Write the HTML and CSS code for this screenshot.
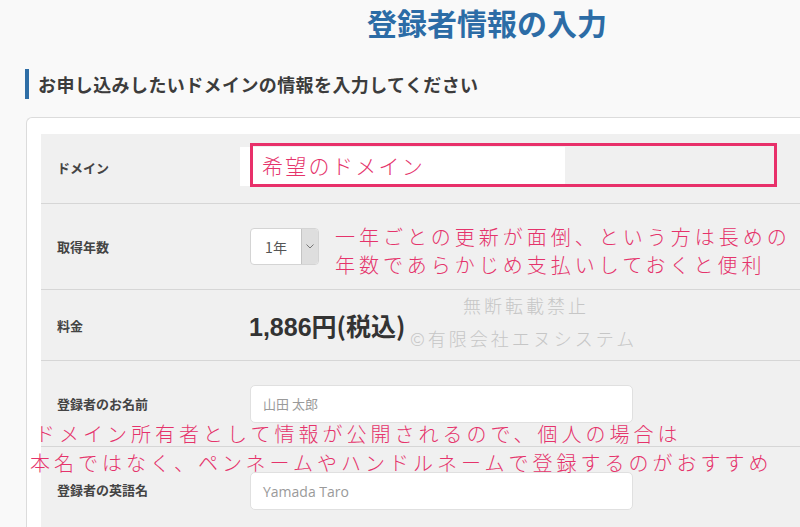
FILE: index.html
```html
<!DOCTYPE html>
<html lang="ja">
<head>
<meta charset="utf-8">
<title>登録者情報の入力</title>
<link rel="stylesheet" href="styles.css">
</head>
<body>
<div class="page">
  <h1 class="title">登録者情報の入力</h1>
  <h2 class="section-head">お申し込みしたいドメインの情報を入力してください</h2>
  <div class="card">
    <div class="table">
      <div class="row row-domain">
        <div class="label">ドメイン</div>
        <div class="field"><div class="domain-input"></div></div>
      </div>
      <div class="row row-years">
        <div class="label">取得年数</div>
        <div class="field">
          <div class="select">
            <span class="select-value">1年</span>
            <span class="select-arrow"><svg width="8" height="5" viewBox="0 0 8 5"><polyline points="0.5,0.5 4,4 7.5,0.5" fill="none" stroke="#777" stroke-width="1"/></svg></span>
          </div>
        </div>
      </div>
      <div class="row row-price">
        <div class="label">料金</div>
        <div class="field price"><span class="num">1,886</span>円(税込)</div>
      </div>
      <div class="row row-name">
        <div class="label">登録者のお名前</div>
        <div class="field"><div class="text-input">山田 太郎</div></div>
      </div>
      <div class="row row-ename">
        <div class="label">登録者の英語名</div>
        <div class="field"><div class="text-input latin">Yamada Taro</div></div>
      </div>
    </div>
  </div>

  <div class="note-box"><span class="note">希望のドメイン</span></div>
  <div class="note note-years">一年ごとの更新が面倒、という方は長めの<br>年数であらかじめ支払いしておくと便利</div>
  <div class="note note-owner1">ドメイン所有者として情報が公開されるので、個人の場合は</div>
  <div class="note note-owner2">本名ではなく、ペンネームやハンドルネームで登録するのがおすすめ</div>
  <div class="mark mark1">無断転載禁止</div>
  <div class="mark mark2">©有限会社エヌシステム</div>
</div>
</body>
</html>
```
FILE: styles.css
```css
html, body {
  margin: 0;
  padding: 0;
}
body {
  background: #f9f9f9;
  height: 527px;
  overflow: hidden;
  font-family: "Noto Sans CJK JP", "Noto Sans", sans-serif;
  color: #333;
}
.page {
  position: relative;
  width: 775px;
  margin-left: 25px;
}
.title {
  margin: 0;
  padding: 4px 0 0 149px;
  font-size: 30px;
  line-height: 36px;
  font-weight: 700;
  color: #2c6ca6;
  text-align: center;
}
.section-head {
  margin: 29px 0 0 0;
  height: 30px;
  display: flex;
  align-items: center;
  border-left: 4px solid #2f6ea6;
  padding-left: 9px;
  font-size: 18px;
  letter-spacing: 0.4px;
  font-weight: 700;
  color: #3c3c3c;
  line-height: 30px;
}
.card {
  margin: 18px 0 0 1px;
  background: #fff;
  border: 1px solid #dcdcdc;
  border-right: none;
  border-bottom: none;
  border-radius: 6px 0 0 0;
  padding: 16px 0 0 14px;
  height: 410px;
  box-sizing: border-box;
}
.table {
  background: #f0f0f0;
  height: 100%;
}
.row {
  display: grid;
  grid-template-columns: 209px 1fr;
  align-items: center;
  border-bottom: 1px solid #d6d6d6;
  box-sizing: border-box;
}
.row-domain { height: 70px; align-items: start; }
.row-domain .label { margin-top: 24px; }
.row-years { height: 86px; }
.row-price { height: 71px; }
.row-name { height: 86px; }
.row-ename { height: 80px; border-bottom: none; align-items: start; }
.row-ename .label { margin-top: 33px; }
.label {
  padding-left: 16px;
  font-size: 13px;
  font-weight: 700;
  color: #444;
}
.domain-input {
  margin: 13px 0 0 -10px;
  width: 325px;
  height: 39px;
  background: #fff;
}
.select {
  display: flex;
  width: 69px;
  height: 37px;
  box-sizing: border-box;
  border: 1px solid #d4d4d4;
  border-radius: 4px;
  background: #fff;
  overflow: hidden;
}
.select-value {
  flex: 1;
  display: flex;
  align-items: center;
  justify-content: center;
  font-size: 14px;
  color: #555;
}
.select-arrow {
  width: 16px;
  display: flex;
  align-items: center;
  justify-content: center;
  background: #dedede;
  border-left: 1px solid #c4c4c4;
}
.price {
  font-size: 25px;
  font-weight: 700;
  color: #333;
  margin-left: -1px;
}
.price .num {
  font-family: "Liberation Sans", sans-serif;
}
.text-input {
  width: 383px;
  height: 38px;
  box-sizing: border-box;
  border: 1px solid #e0e0e0;
  border-radius: 5px;
  background: #fff;
  padding-left: 12px;
  display: flex;
  align-items: center;
  font-size: 13px;
  color: #9a9a9a;
}
.text-input.latin {
  font-family: "Open Sans", sans-serif;
  font-size: 14px;
  margin-top: 25px;
}
.note {
  font-family: "Noto Sans CJK JP", sans-serif;
  font-weight: 300;
  color: #e5336b;
  font-size: 20px;
  letter-spacing: 4px;
  line-height: 28px;
  white-space: nowrap;
}
.note-box {
  position: absolute;
  left: 225px;
  top: 143px;
  width: 527px;
  height: 44px;
  box-sizing: border-box;
  border: 3px solid #e8306a;
  padding-left: 9px;
  display: flex;
  align-items: center;
}
.note-box .note {
  font-size: 21px;
  letter-spacing: 2.3px;
}
.note-years {
  position: absolute;
  left: 310px;
  top: 223px;
}
.note-owner1 {
  position: absolute;
  left: 10px;
  top: 420px;
}
.note-owner2 {
  position: absolute;
  left: 5px;
  top: 449px;
}
.mark {
  position: absolute;
  font-weight: 300;
  color: #c6c6c6;
  font-size: 18px;
  letter-spacing: 3px;
  line-height: 24px;
  white-space: nowrap;
}
.mark1 { left: 438px; top: 293px; }
.mark2 { left: 385px; top: 326px; }
```
